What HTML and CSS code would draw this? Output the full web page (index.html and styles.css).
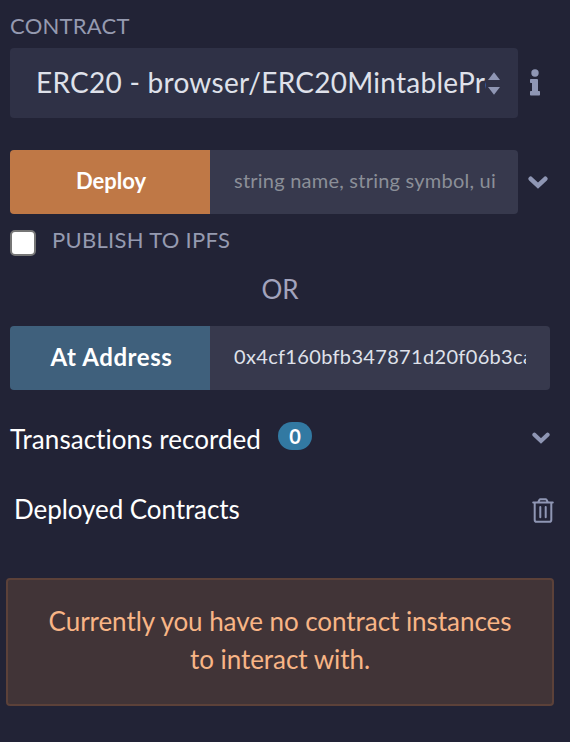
FILE: index.html
```html
<!DOCTYPE html>
<html lang="en">
<head>
<meta charset="utf-8">
<title>Deploy &amp; run</title>
<link rel="stylesheet" href="styles.css">
</head>
<body>
<main class="panel">
  <div class="label">CONTRACT</div>
  <div class="row contract">
    <div class="select">
      <span class="select-text">ERC20 - browser/ERC20MintablePreset</span>
      <svg class="arrows" width="12" height="23" viewBox="0 0 12 23"><path d="M0 8 6 .3 12 8zM0 15H12L6 22.700z"/></svg>
    </div>
    <svg class="info" width="10" height="27" viewBox="0 0 10 27"><circle cx="5" cy="4" r="3.7"/><path d="M.8 10H7a1 1 0 0 1 1 1v11h1.200a.8.8 0 0 1 .8.8v3a.8.8 0 0 1-.8.8H.8a.8.8 0 0 1-.8-.8v-3a.8.8 0 0 1 .8-.8H2v-8H.8a.8.8 0 0 1-.8-.8V10.800a.8.8 0 0 1 .8-.8z"/></svg>
  </div>
  <div class="row deploy">
    <button class="btn btn-deploy">Deploy</button>
    <div class="field placeholder">string name, string symbol, ui</div>
    <svg class="chevron" width="20" height="13" viewBox="0 0 20 13"><path d="M2.700 2.800 10 9.700 17.300 2.800"/></svg>
  </div>
  <div class="publish">
    <input type="checkbox" id="ipfs" class="check">
    <label for="ipfs">PUBLISH TO IPFS</label>
  </div>
  <div class="or">OR</div>
  <div class="row address">
    <button class="btn btn-address">At Address</button>
    <div class="field value"><span>0x4cf160bfb347871d20f06b3ca</span></div>
  </div>
  <div class="section transactions">
    <span class="title">Transactions recorded</span>
    <span class="badge">0</span>
    <svg class="chevron end" width="18" height="12" viewBox="0 0 20 13"><path d="M2.700 2.800 10 9.700 17.300 2.800"/></svg>
  </div>
  <div class="section deployed">
    <span class="title">Deployed Contracts</span>
    <svg class="trash end" width="22" height="26" viewBox="0 0 22 26"><path d="M1.200 5.600H20.800M6 5.400 7.500 2.700Q7.800 2.200 8.400 2.200H13.600Q14.200 2.200 14.500 2.700L16 5.400M2.700 6V22.900Q2.700 24.700 4.500 24.700H17.500Q19.300 24.700 19.300 22.900V6M8.300 10V20.300M13.700 10V20.300"/></svg>
  </div>
  <div class="notice">Currently you have no contract instances<br>to interact with.</div>
</main>
</body>
</html>
```
FILE: styles.css
```css
* { box-sizing: border-box; }

body {
  margin: 0;
  background: #222336;
  color: #fff;
  font-family: Lato, "Liberation Sans", sans-serif;
}

.panel {
  width: 570px;
  height: 742px;
  padding: 12px 0 0 10px;
  overflow: hidden;
}

.label {
  height: 36px;
  font-size: 22px;
  line-height: 27px;
  letter-spacing: 0.25px;
  color: #959ab0;
}

.row { display: flex; align-items: center; }

.select {
  display: flex;
  align-items: center;
  width: 508px;
  height: 70px;
  padding-left: 26px;
  border-radius: 4px;
  background: #2f3146;
}

.select-text {
  width: 450px;
  height: 70px;
  overflow: hidden;
  white-space: nowrap;
  font-size: 28px;
  line-height: 68px;
  letter-spacing: 0.27px;
  color: #dfe1ea;
}

.arrows, .info { fill: #8f96b4; flex: none; }
.arrows { margin-left: 2px; }
.info { margin: 0 0 2px 12px; }

.deploy { margin-top: 32px; }

.btn {
  width: 200px;
  height: 64px;
  padding: 0 0 4px 2px;
  border: 0;
  border-radius: 4px 0 0 4px;
  font-family: inherit;
  font-weight: 700;
  color: #fff;
}

.btn-deploy {
  background: #bf7846;
  font-size: 22px;
  letter-spacing: 0;
}

.btn-address {
  background: #3f607c;
  font-size: 24px;
  letter-spacing: 0.6px;
  padding-left: 3px;
}

.field {
  height: 64px;
  padding: 0 24px;
  border-radius: 0 4px 4px 0;
  background: #37394d;
  font-size: 20px;
  line-height: 60px;
  white-space: nowrap;
}

.field span {
  display: block;
  overflow: hidden;
}

.placeholder {
  width: 308px;
  color: #8b8f98;
  letter-spacing: 0.23px;
}

.value {
  width: 340px;
  color: #dfe1ea;
  letter-spacing: 0.33px;
}

.chevron {
  fill: none;
  stroke: #8f96b4;
  stroke-width: 4.6;
  stroke-linecap: round;
}

.deploy .chevron { margin-left: 10px; }

.publish {
  display: flex;
  height: 58px;
  padding-top: 12px;
  font-size: 22px;
  line-height: 27px;
  letter-spacing: 0.3px;
  color: #959ab0;
}

.check {
  appearance: none;
  width: 26px;
  height: 26px;
  margin: 4px 16px 0 0;
  border: 2px solid #767676;
  border-radius: 5px;
  background: #fff;
}

.or {
  width: 540px;
  height: 54px;
  line-height: 34px;
  text-align: center;
  font-size: 26px;
  color: #a2a3bd;
}

.section {
  display: flex;
  align-items: center;
  width: 540px;
  font-size: 26px;
}

.end { margin-left: auto; }

.transactions {
  height: 40px;
  margin-top: 28px;
}

.transactions .title { padding-top: 1px; letter-spacing: 0.05px; }

.badge {
  width: 34px;
  height: 28px;
  margin: -4px 0 0 17px;
  border-radius: 14px;
  background: #3279a2;
  font-size: 20px;
  font-weight: 700;
  line-height: 29px;
  text-align: center;
}

.deployed {
  width: 544px;
  height: 40px;
  margin-top: 32px;
  padding-left: 4px;
}

.deployed .title { padding-bottom: 2px; letter-spacing: -0.07px; }

.trash {
  fill: none;
  stroke: #8f96b4;
  stroke-width: 2;
  stroke-linecap: round;
}

.notice {
  width: 548px;
  height: 128px;
  margin: 48px 0 0 -4px;
  padding-top: 22px;
  border: 2px solid #5c4139;
  border-radius: 4px;
  background: #413437;
  color: #f8b586;
  font-size: 26px;
  line-height: 38px;
  letter-spacing: -0.05px;
  text-align: center;
}
```
